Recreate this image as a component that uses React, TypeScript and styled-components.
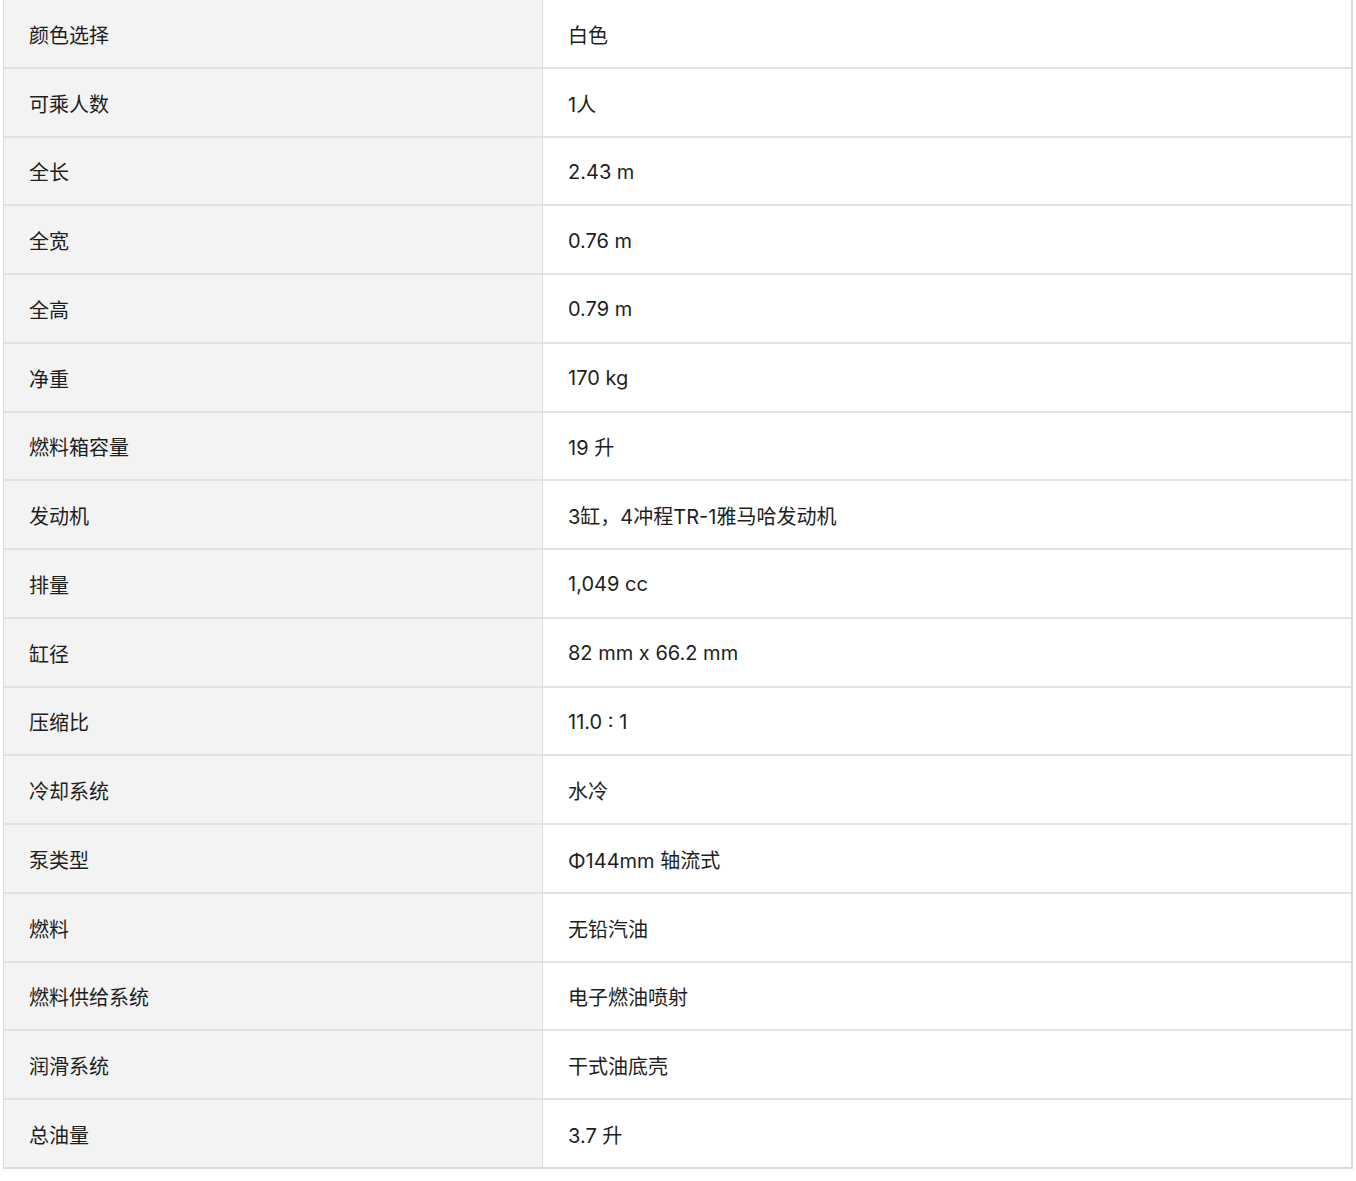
import React from 'react'
import styled, { createGlobalStyle } from 'styled-components'

const GlobalStyle = createGlobalStyle`
  body {
    margin: 0;
    background: #fff;
    font-family: Inter, "Noto Sans CJK SC", sans-serif;
  }
`

const specs: [string, string][] = [
  ['颜色选择', '白色'],
  ['可乘人数', '1人'],
  ['全长', '2.43 m'],
  ['全宽', '0.76 m'],
  ['全高', '0.79 m'],
  ['净重', '170 kg'],
  ['燃料箱容量', '19 升'],
  ['发动机', '3缸，4冲程TR-1雅马哈发动机'],
  ['排量', '1,049 cc'],
  ['缸径', '82 mm x 66.2 mm'],
  ['压缩比', '11.0 : 1'],
  ['冷却系统', '水冷'],
  ['泵类型', 'Φ144mm 轴流式'],
  ['燃料', '无铅汽油'],
  ['燃料供给系统', '电子燃油喷射'],
  ['润滑系统', '干式油底壳'],
  ['总油量', '3.7 升'],
]

const Page = styled.div`
  padding: 0 3px;
`

const Table = styled.div`
  border-left: 1px solid #dcdcdc;
  border-right: 2px solid #dcdcdc;
`

const Row = styled.div`
  display: grid;
  grid-template-columns: 539px 1fr;
  height: 68.75px;
  box-sizing: border-box;
  border-bottom: 2px solid #e2e2e2;
  &:last-child {
    border-bottom: 2px solid #dcdcdc;
  }
`

const Label = styled.div`
  display: flex;
  align-items: center;
  padding: 2px 0 0 25px;
  background: #f3f3f3;
  border-right: 1px solid #dcdcdc;
  color: #1e1e1e;
  font-size: 20px;
`

const Value = styled.div`
  display: flex;
  align-items: center;
  padding: 2px 0 0 25px;
  background: #fff;
  color: #1e1e1e;
  font-size: 20px;
`

export default function App(): JSX.Element {
  return (
    <Page>
      <GlobalStyle />
      <Table>
        {specs.map(([label, value], index) => (
          <Row key={index}>
            <Label>{label}</Label>
            <Value>{value}</Value>
          </Row>
        ))}
      </Table>
    </Page>
  )
}
